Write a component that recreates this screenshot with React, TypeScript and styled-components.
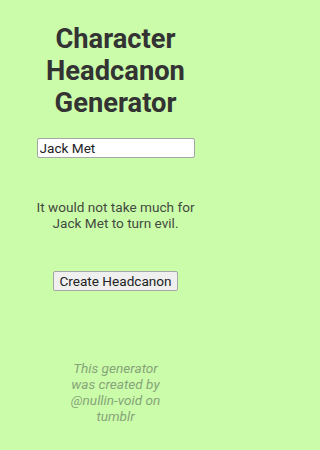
import {type FC, useState} from 'react';
import styled, {createGlobalStyle} from 'styled-components';

const GlobalStyle = createGlobalStyle`
  html, body {
    margin: 0;
    padding: 0;
    background-color: #cbfcaa;
  }
  body {
    font-family: Roboto, 'Liberation Sans', sans-serif;
  }
`;

const Page = styled.main`
  display: flex;
  flex-direction: column;
  align-items: center;
  width: 244px;
  min-height: 450px;
  padding: 23px 13px 0 0;
  box-sizing: border-box;
`;

const Title = styled.h1`
  margin: 0;
  width: 190px;
  font-size: 27.3px;
  line-height: 32px;
  font-weight: 700;
  color: #333333;
  text-align: center;
`;

const NameInput = styled.input`
  margin-top: 19px;
  width: 158px;
  height: 20px;
  box-sizing: border-box;
  padding: 0 2px;
  border: 1px solid #a6a6a6;
  border-radius: 2px;
  background: #fff;
  font-family: Roboto, 'Liberation Sans', sans-serif;
  font-size: 13.6px;
  color: #222;
  outline: none;
`;

const Result = styled.p`
  margin: 41px 0 0;
  width: 170px;
  font-size: 13.6px;
  line-height: 16px;
  color: #434a40;
  text-align: center;
`;

const CreateButton = styled.button`
  margin-top: 40px;
  height: 20px;
  padding: 0 5px;
  border: 1px solid #a6a6a6;
  border-radius: 2px;
  background: #efefef;
  font-family: Roboto, 'Liberation Sans', sans-serif;
  font-size: 13.6px;
  line-height: 18px;
  color: #222;
  cursor: pointer;
`;

const Credit = styled.p`
  margin: 69px 0 0;
  width: 96px;
  font-size: 13.6px;
  line-height: 16px;
  font-style: italic;
  color: #86a479;
  text-align: center;
`;

const evils = [
  'It would not take much for',
  'would make a terrible villain, but tries anyway.',
  'secretly collects spoons.',
];

const App: FC = () => {
  const [name, setName] = useState('Jack Met');
  const [text, setText] = useState(`It would not take much for ${name} to turn evil.`);

  const create = () => {
    const pick = evils[Math.floor(Math.random() * evils.length)];
    setText(pick === evils[0] ? `${pick} ${name} to turn evil.` : `${name} ${pick}`);
  };

  return (
    <Page>
      <GlobalStyle />
      <Title>Character Headcanon Generator</Title>
      <NameInput value={name} onChange={e => setName(e.target.value)} />
      <Result>{text}</Result>
      <CreateButton onClick={create}>Create Headcanon</CreateButton>
      <Credit>This generator was created by @nullin-void on tumblr</Credit>
    </Page>
  );
};

export default App;
